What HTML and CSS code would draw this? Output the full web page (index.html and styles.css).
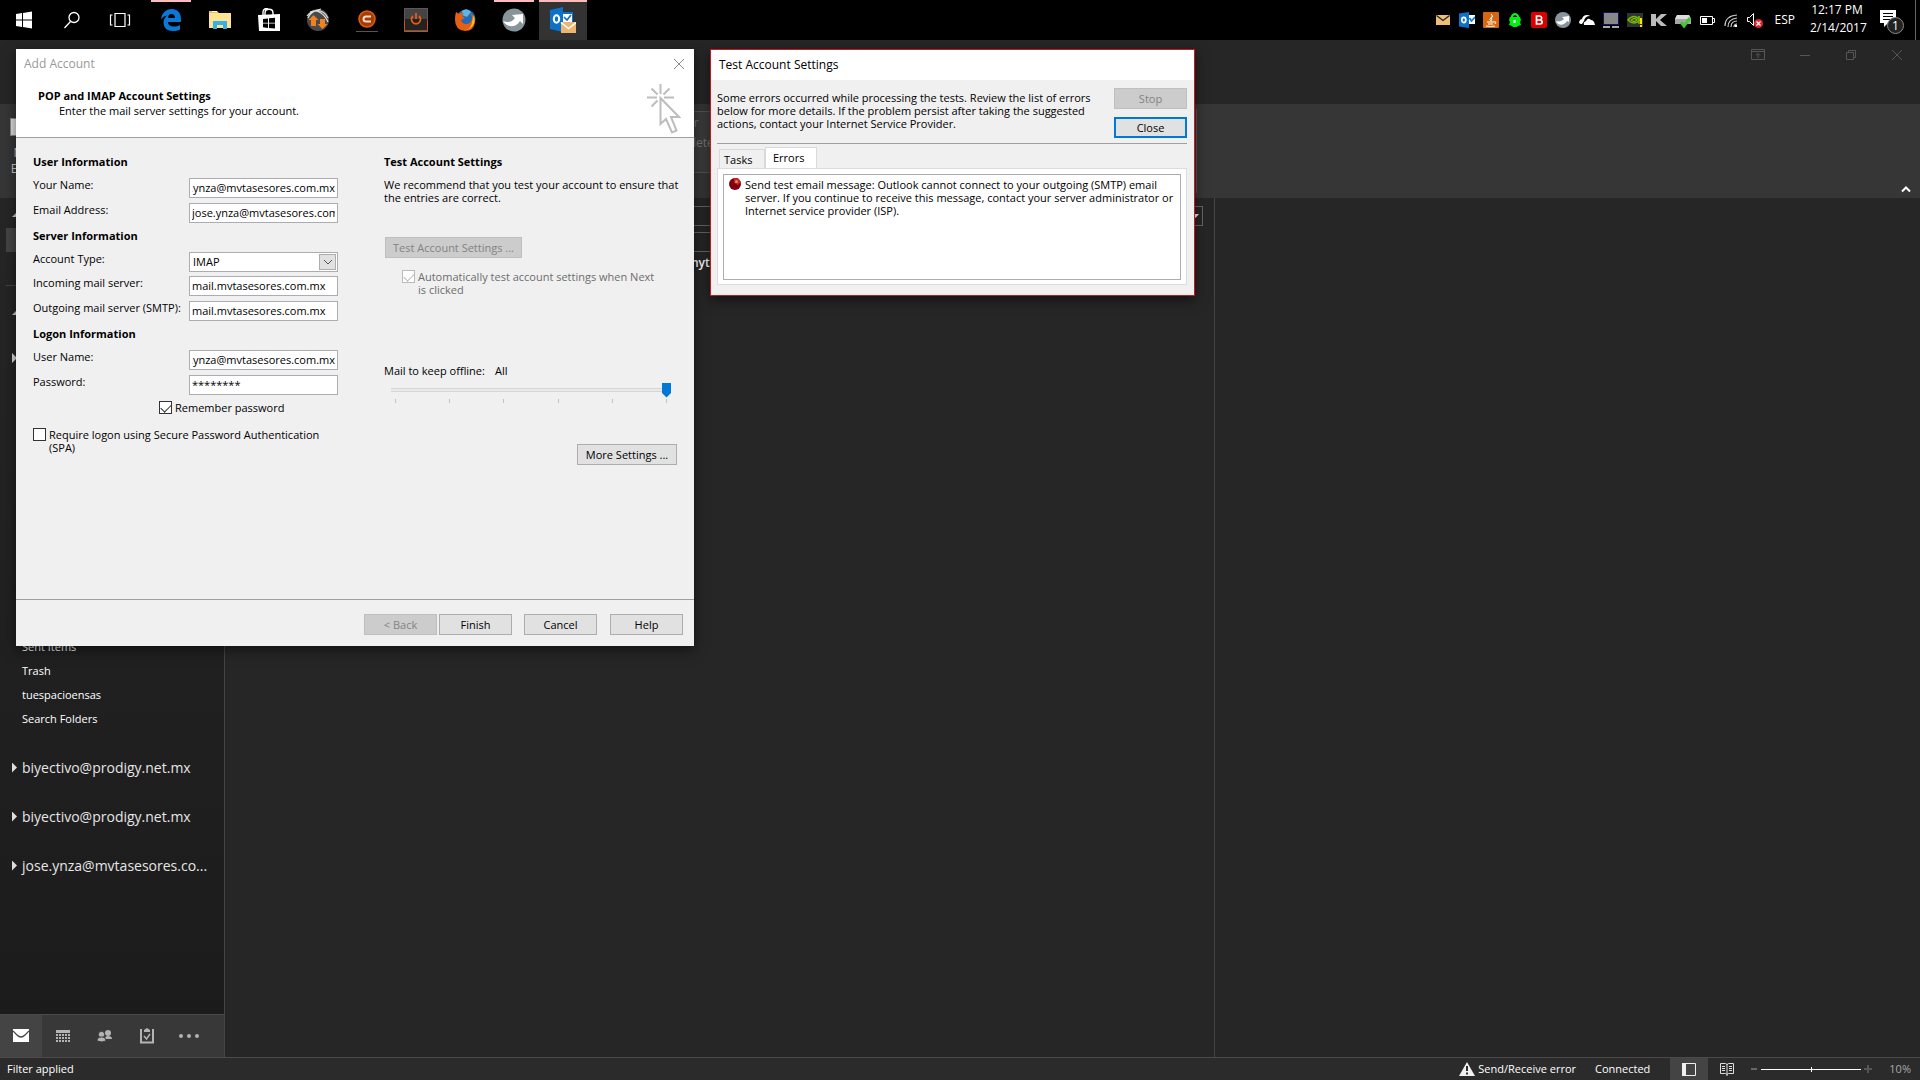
FILE: index.html
```html
<!DOCTYPE html>
<html lang="en">
<head>
<meta charset="utf-8">
<title>Outlook</title>
<link rel="stylesheet" href="styles.css">
</head>
<body>
<header class="taskbar">
  <nav class="apps">
    <button class="app" aria-label="Start"><svg width="18" height="18" viewBox="0 0 18 18" fill="#fff"><path d="M1 3l6-1v6.500H1zM8 2l9-1.500v8H8zM1 9.500h6V16l-6-1zM8 9.500h9v8L8 16z"/></svg></button>
    <button class="app" aria-label="Search"><svg width="18" height="18" viewBox="0 0 18 18" fill="none" stroke="#fff" stroke-width="1.300"><circle cx="11" cy="6.500" r="5"/><path d="M7.500 10.500L1.500 17"/></svg></button>
    <button class="app" aria-label="Task View"><svg width="22" height="18" viewBox="0 0 22 18" fill="none" stroke="#fff" stroke-width="1.200"><path d="M6 2.500h10v13H6zM3.500 4H1.500v10h2M18.500 4h2v10h-2"/></svg></button>
    <button class="app app-wide edge open" aria-label="Edge"><svg width="22" height="24" viewBox="0 0 22 24"><path fill="#0a78d7" d="M1 12C1.500 5 6 1 11.500 1 17.500 1 21 5 21 11v3H8c0 3 2.500 4.500 6 4.500 2.200 0 4.200-.6 6-1.600v4.600c-2 1-4.500 1.500-7 1.500-6 0-9.500-3.500-9.500-8.500 0-3 1.500-5.500 4-7C4 8 2.200 9.500 1 12zm7-2h7c0-2.500-1.300-4-3.500-4S8.200 7.500 8 10z"/></svg></button>
    <button class="app" aria-label="File Explorer"><svg width="22" height="20" viewBox="0 0 22 20"><path fill="#e8c35a" d="M0 1h8l2 2h11v3H0z"/><path fill="#fde492" d="M0 3h22v15H0z"/><path fill="#fff" d="M3 1h5v1H3z"/><path fill="#36b0e6" d="M4 11h14v8h-4v-4H8v4H4z"/></svg></button>
    <button class="app" aria-label="Store"><svg width="22" height="25" viewBox="0 0 22 25"><path d="M7 7V5c0-5 8-5 8 0v2M5 7V4c0-3 3-4 5-3" fill="none" stroke="#fff" stroke-width="1.400"/><path fill="#fff" d="M0 7l22-1v17L1 23z"/><path d="M5 11l5-.6v4.300H5zM11 10.300l6-.6v5h-6zM5 15.600h5V20l-5-.7zM11 15.600h6v5l-6-.5z"/></svg></button>
    <button class="app" aria-label="Sync"><svg width="24" height="24" viewBox="0 0 24 24"><circle cx="12" cy="12" r="11" fill="#4a4a4a"/><path d="M1 8C6 1 17 0 22 10M4 4c7-3 14 1 18 10M2 10C4 5 10 2 15 1" fill="none" stroke="#ddd" stroke-width="1.200"/><path fill="#f08020" d="M7.500 7l5 5H10v6H5v-6H2.500zM16.500 21l-5-5H14v-5h5v5h2.500z"/></svg></button>
    <button class="app" aria-label="Comodo"><svg width="24" height="26" viewBox="0 0 24 26"><circle cx="12" cy="12" r="8" fill="#a63c00" stroke="#e0600e" stroke-width="1.500"/><path d="M16 9.500H11q-2.500 0-2.500 2.500t2.500 2.500h5" fill="none" stroke="#f3dccd" stroke-width="2"/><path stroke="#555" d="M1 24.500h22"/></svg></button>
    <button class="app" aria-label="Power"><svg width="24" height="24" viewBox="0 0 24 24"><path fill="#383838" d="M0 0h24v24H0z"/><path d="M.5.500h23v22H.5z" fill="#444" stroke="#5a5a5a"/><path d="M1 11h22v11H1z" fill="#222"/><path stroke="#c4531a" d="M.5 12v11.500h23V12" fill="none"/><path d="M9 8a4.500 4.500 0 1 0 6 0M12 5v6" fill="none" stroke="#f25c0e" stroke-width="1.700"/></svg></button>
    <button class="app" aria-label="Firefox"><svg width="22" height="24" viewBox="0 0 22 24"><circle cx="12" cy="11" r="9.500" fill="#2469b5"/><path fill="#5db6e4" d="M8 3q5-4 9 1l-4 5-5-2z"/><path fill="#e75f12" d="M2 4l3 2q2-2 5-1L8 8l3 2-4 2q1 4 5 4 5 0 6-5 0-4-2-6 5 3 5 9-1 9-10 9Q1 22 1 12q0-5 1-8z"/><path fill="#fbbb20" d="M20 7q3 12-8 15 6-3 6-8 1-5 2-7z"/></svg></button>
    <button class="app app-wide browser open" aria-label="Browser"><svg width="24" height="24" viewBox="0 0 24 24"><circle cx="12" cy="12" r="11.500" fill="#87949b"/><path fill="#fff" d="M1 13c5 2 9 1 12-3l-3-3 11-1v10l-3-3c-4 7-13 7-17 0z"/></svg></button>
    <button class="app app-active open" aria-label="Outlook"><svg width="26" height="26" viewBox="0 0 26 26"><path fill="#0a73c9" d="M0 3l13-3v25L0 22zM13 5h10v13H13z"/><path fill="#fff" d="M13 7h9v9h-9z"/><path d="M14 10l3 3 4-5" fill="none" stroke="#0a73c9" stroke-width="1.700"/><ellipse cx="6.500" cy="12" rx="2.700" ry="3.700" fill="none" stroke="#fff" stroke-width="2"/><path fill="#edb56f" d="M11 15h15v11H11z"/><path d="M11 15.500l7.500 6 7.500-6" fill="none" stroke="#fff" stroke-width="1.500"/></svg></button>
  </nav>
  <div class="tray">
    <svg viewBox="0 0 16 16"><path fill="#efbd7a" d="M1 3h14v10H1z"/><path d="M1.500 3.500L8 8.500l6.500-5" fill="none" stroke="#222" stroke-width="1.300"/></svg>
    <svg viewBox="0 0 16 16"><path fill="#0a73c9" d="M0 1.500L10 0v16L0 14.500z"/><path fill="#fff" d="M10 3h6v9h-6z"/><ellipse cx="4.800" cy="8" rx="2" ry="2.600" fill="none" stroke="#fff" stroke-width="1.700"/><path d="M10.500 6l2 3L16 5" fill="none" stroke="#0a73c9" stroke-width="1.500"/></svg>
    <svg viewBox="0 0 16 16"><rect width="16" height="16" rx="1" fill="#d8660f"/><path d="M8 2q3 2 0 4t1 3M10 4q-3 2-1 4M4 10h7q3-1 1 2M5 12h5M3 14q5 1 9 0" fill="none" stroke="#fff"/></svg>
    <svg viewBox="0 0 16 16"><path d="M5 7V4q3-4 6 0v3" fill="none" stroke="#0f1" stroke-width="2"/><path fill="#00f010" d="M3 5h10l1 3-1 2 1 3-3 1-1 1H6l-1-1-3-1 1-3-1-2z"/><path d="M7.500 8v3" stroke="#fff" stroke-width="2"/></svg>
    <svg viewBox="0 0 16 16"><rect width="16" height="16" rx="2" fill="#dc0000"/><path d="M5.500 4h3.200q2 .3 2 2T8.700 8H5.500zM5.500 8h3.500q2.200.3 2.200 2T9 12H5.500z" fill="none" stroke="#fff" stroke-width="1.700"/></svg>
    <svg viewBox="0 0 16 16"><circle cx="8" cy="8" r="8" fill="#87949b"/><path fill="#fff" d="M1 9c3 1 6 0 8-2L7 5l7-1v6l-2-1c-3 5-9 5-11 0z"/></svg>
    <svg viewBox="0 0 16 16"><path fill="#fff" d="M0 10q1-3 3-3 1-4 5-4 2 0 3 1-5 0-6 5l-2 3Q0 12 0 10zM5 13q-1-3 2-4 2-4 5-1 3 0 4 5z"/></svg>
    <svg viewBox="0 0 16 16"><path fill="#888" stroke="#116" d="M.5.500h15v12H.5z"/><path fill="#aaa" d="M0 14h7v2H0zM9 14h7v2H9z"/></svg>
    <svg viewBox="0 0 16 16"><path fill="#2d3436" d="M0 1h16v14H0z"/><path d="M1 8q6-7 12 0-6 6-12 0zM4 8q4-3 6 0-3 3-6 0M12 4v8" fill="none" stroke="#76b900" stroke-width="1.500"/><path stroke="#ffe000" stroke-width="2" d="M14 6v6M14 13v2"/></svg>
    <svg viewBox="0 0 16 16"><path fill="#bbb" d="M0 2h5v5l5-5h6L9 8l7 6h-6L5 9v5H0z"/></svg>
    <svg viewBox="0 0 16 16"><path fill="#a6a6ab" d="M2 3h12l2 4v5H0V7z"/><path fill="#ddd" d="M2 3h12l2 4H0z"/><path d="M6 10l3 4 6-8" fill="none" stroke="#49c52f" stroke-width="3"/></svg>
    <svg viewBox="0 0 16 16"><path d="M1.500 4.500h12v8h-12zM13.500 6.500h2v4h-2" fill="none" stroke="#fff"/><path fill="#fff" d="M3 6h5v5H3z"/></svg>
    <svg viewBox="0 0 16 16"><path d="M2 14Q2 4 14 3M5 15Q5 7 14 6M8 15q0-6 6-6M11 15q0-3 3-3" fill="none" stroke="#ccc" stroke-width="1.200"/><path fill="#fff" d="M12 13h2v2h-2z"/></svg>
    <svg viewBox="0 0 16 16"><path d="M.5 5.500h2l4-4v12l-4-4h-2z" fill="none" stroke="#fff"/><circle cx="11.500" cy="11.500" r="4.500" fill="#dc2430"/><path d="M9.500 9.500l4 4M13.500 9.500l-4 4" stroke="#fff" stroke-width="1.200"/></svg>
    <span class="lang">ESP</span>
    <time class="clock"><span>12:17 PM</span><span>2/14/2017</span></time>
    <button class="notify" aria-label="Notifications"><svg viewBox="0 0 24 24"><path fill="#fff" d="M0 0h16v13h-8l-4 4v-4H0z"/><path stroke="#000" d="M3 3.500h10M3 6.500h10M3 9.500h7"/></svg><span class="count">1</span></button>
  </div>
</header>

<main class="outlook">
  <div class="caption">
    <button aria-label="Ribbon options"><svg width="14" height="12" viewBox="0 0 14 12"><path d="M.5.500h13v10H.5zM.5 2.500h13M7 9V4.500M5 6.500l2-2 2 2"/></svg></button>
    <button aria-label="Minimize"><svg width="12" height="12" viewBox="0 0 12 12"><path d="M1 6.500h10"/></svg></button>
    <button aria-label="Restore"><svg width="12" height="12" viewBox="0 0 12 12"><path d="M1.500 3.500h7v7h-7zM3.500 3.500v-2h7v7h-2"/></svg></button>
    <button aria-label="Close"><svg width="12" height="12" viewBox="0 0 12 12"><path d="M1 1l10 10M11 1L1 11"/></svg></button>
  </div>
  <div class="ribbon">
    <button class="new-email"><span class="sheet"></span><span>New</span><span>Email</span></button>
    <div class="quick-steps"><div class="gallery"><span>To Manager</span><span>Reply &amp; Delete</span></div></div>
    <button class="collapse" aria-label="Collapse ribbon"><svg width="10" height="8" viewBox="0 0 10 8"><path d="M1 6.500l4-4 4 4" fill="none" stroke="#fff" stroke-width="2"/></svg></button>
  </div>
  <div class="panes">
    <aside class="sidebar">
      <div class="favorites"><span class="tri-open"></span><span class="selected-row"></span></div>
      <div class="account-top"><span class="tri-open"></span></div>
      <div class="account-sub"><span class="tri"></span></div>
      <ul class="folders">
        <li><a href="#">Sent Items</a></li>
        <li><a href="#">Trash</a></li>
        <li><a href="#">tuespacioensas</a></li>
        <li><a href="#">Search Folders</a></li>
      </ul>
      <ul class="accounts">
        <li><span class="tri"></span><a href="#">biyectivo@prodigy.net.mx</a></li>
        <li><span class="tri"></span><a href="#">biyectivo@prodigy.net.mx</a></li>
        <li><span class="tri"></span><a href="#">jose.ynza@mvtasesores.co...</a></li>
      </ul>
      <nav class="modules">
        <button class="module current" aria-label="Mail"><svg width="16" height="14" viewBox="0 0 16 14"><path fill="#fff" d="M0 0h16v13H0z"/><path d="M0 2l4 4q4 4 8 0l4-4" fill="none" stroke="#444" stroke-width="1.200"/></svg></button>
        <button class="module" aria-label="Calendar"><svg width="14" height="12" viewBox="0 0 14 12"><path fill="#b4b4b4" d="M0 0h14v3H0z"/><path d="M0 5h14M0 8h14M0 11h14" stroke="#b4b4b4" stroke-width="2" stroke-dasharray="2 1"/></svg></button>
        <button class="module" aria-label="People"><svg width="16" height="14" viewBox="0 0 16 14" fill="#b4b4b4"><circle cx="11" cy="4" r="3"/><path d="M8 10q0-3 3-3 4 0 4 3z"/><g stroke="#383838"><circle cx="4.500" cy="5.500" r="3.200"/><path d="M0 12q0-4 4.500-4T9 12q-4 2-9 0z"/></g></svg></button>
        <button class="module" aria-label="Tasks"><svg width="14" height="16" viewBox="0 0 14 16"><path d="M1 1v13.500h12V1" fill="none" stroke="#b4b4b4" stroke-width="2"/><path fill="#b4b4b4" d="M4 2l3-2 3 2v2H4z"/><path d="M4 8l2.500 3L10 6" fill="none" stroke="#b4b4b4" stroke-width="1.500"/></svg></button>
        <button class="module" aria-label="More"><svg width="20" height="4" viewBox="0 0 20 4" fill="#b4b4b4"><circle cx="2" cy="2" r="2"/><circle cx="10" cy="2" r="2"/><circle cx="18" cy="2" r="2"/></svg></button>
      </nav>
    </aside>
    <section class="list-pane">
      <div class="search-box"><span class="caret"></span></div>
      <div class="list-head"></div>
      <p class="empty">We didn't find anything to show here.</p>
    </section>
    <section class="reading-pane"></section>
  </div>
  <footer class="status">
    <span>Filter applied</span>
    <div class="status-right">
      <span class="sync"><svg width="16" height="14" viewBox="0 0 16 14"><path fill="#f0f0f0" d="M8 0l8 14H0z"/><path stroke="#2b2b2b" stroke-width="2" d="M8 4v5M8 10.500v2"/></svg>Send/Receive error</span>
      <span class="conn">Connected</span>
      <button class="view view-on" aria-label="Normal view"><svg width="14" height="13" viewBox="0 0 14 13"><path d="M.5.500h13v12H.5z" fill="none" stroke="#f0f0f0"/><path fill="#f0f0f0" d="M0 0h4v13H0z"/></svg></button>
      <button class="view" aria-label="Reading view"><svg width="14" height="13" viewBox="0 0 14 13"><path d="M.5.500h5l1.500 1 1.500-1h5v10h-5l-1.500 1-1.500-1h-5zM7 1v12M2 3.500h3M2 5.500h3M2 7.500h3M9 3.500h3M9 5.500h3M9 7.500h3" fill="none" stroke="#ddd"/></svg></button>
      <span class="minus"><svg width="6" height="6" viewBox="0 0 6 6"><path stroke="#666" stroke-width="2" d="M0 3h6"/></svg></span>
      <input class="zoom" type="range" min="0" max="100" value="50" aria-label="Zoom">
      <span class="plus"><svg width="8" height="8" viewBox="0 0 8 8"><path stroke="#555" stroke-width="2" d="M0 4h8M4 0v8"/></svg></span>
      <span class="percent">10%</span>
    </div>
  </footer>
</main>

<section class="dialog add-account" role="dialog" aria-label="Add Account">
  <header class="add-head">
    <div class="add-title"><span>Add Account</span><button class="x" aria-label="Close"><svg width="12" height="12" viewBox="0 0 12 12"><path d="M1 1l10 10M11 1L1 11" stroke="#888"/></svg></button></div>
    <div class="add-intro">
      <div><h1>POP and IMAP Account Settings</h1><p>Enter the mail server settings for your account.</p></div>
      <svg class="pointer" width="34" height="50" viewBox="0 0 34 50" fill="none" stroke="#bdbdbd" stroke-width="2"><path d="M13.500 0v10M0 13.500h10M17 13.500h10M4.500 4.500l6 6M22.500 4.500l-6 6M4.500 22.500l6-6M13.500 14v26l5.500-5 6 13.500 4.500-2L24 33h8z"/></svg>
    </div>
  </header>
  <div class="add-body">
    <form class="form">
      <h2>User Information</h2>
      <div class="row"><label for="name">Your Name:</label><input class="field tail" id="name" type="text" value="jose.ynza@mvtasesores.com.mx"></div>
      <div class="row"><label for="email">Email Address:</label><input class="field" id="email" type="text" value="jose.ynza@mvtasesores.com.mx"></div>
      <h2>Server Information</h2>
      <div class="row row-tight"><label for="type">Account Type:</label><span class="select"><select class="field" id="type"><option>IMAP</option></select><span class="drop"><svg width="10" height="6" viewBox="0 0 10 6"><path d="M1 1l4 4 4-4" fill="none" stroke="#555"/></svg></span></span></div>
      <div class="row"><label for="in">Incoming mail server:</label><input class="field" id="in" type="text" value="mail.mvtasesores.com.mx"></div>
      <div class="row"><label for="out">Outgoing mail server (SMTP):</label><input class="field" id="out" type="text" value="mail.mvtasesores.com.mx"></div>
      <h2>Logon Information</h2>
      <div class="row"><label for="user">User Name:</label><input class="field tail" id="user" type="text" value="jose.ynza@mvtasesores.com.mx"></div>
      <div class="row"><label for="pass">Password:</label><input class="field" id="pass" type="text" value="********"></div>
      <label class="check remember"><input type="checkbox" checked><span>Remember password</span></label>
      <label class="check spa"><input type="checkbox"><span>Require logon using Secure Password Authentication (SPA)</span></label>
    </form>
    <div class="test">
      <h2>Test Account Settings</h2>
      <p>We recommend that you test your account to ensure that the entries are correct.</p>
      <button class="btn btn-test" disabled>Test Account Settings ...</button>
      <label class="check auto"><input type="checkbox" checked disabled><span>Automatically test account settings when Next is clicked</span></label>
      <label class="offline" for="offline"><span>Mail to keep offline:</span><span>All</span></label>
      <input class="slider" id="offline" type="range" min="0" max="5" value="5">
      <div class="ticks"><i></i><i></i><i></i><i></i><i></i><i></i></div>
      <button class="btn btn-more">More Settings ...</button>
    </div>
  </div>
  <footer class="add-foot">
    <button class="btn" disabled>&lt; Back</button>
    <button class="btn finish">Finish</button>
    <button class="btn cancel">Cancel</button>
    <button class="btn">Help</button>
  </footer>
</section>

<section class="dialog test-dialog" role="dialog" aria-label="Test Account Settings">
  <header class="test-title">Test Account Settings</header>
  <div class="test-top">
    <p>Some errors occurred while processing the tests. Review the list of errors below for more details. If the problem persist after taking the suggested actions, contact your Internet Service Provider.</p>
    <div class="test-actions"><button class="btn" disabled>Stop</button><button class="btn primary">Close</button></div>
  </div>
  <div class="tabs"><button class="tab">Tasks</button><button class="tab tab-on">Errors</button></div>
  <div class="panel"><div class="errors">
    <svg width="12" height="12" viewBox="0 0 12 12"><circle cx="6" cy="6" r="6" fill="#800010"/><path fill="#d02030" d="M5 0h4l3 4-3 3-4-2z"/><circle cx="7.500" cy="3.500" r="1.500" fill="#b8a040"/></svg>
    <p>Send test email message: Outlook cannot connect to your outgoing (SMTP) email server. If you continue to receive this message, contact your server administrator or Internet service provider (ISP).</p>
  </div></div>
</section>
</body>
</html>
```
FILE: styles.css
```css
* { box-sizing: border-box; }
body {
  margin: 0;
  min-height: 100vh;
  display: flex;
  flex-direction: column;
  background: #262626;
  color: #fff;
  font: 12px/16px "Open Sans", "Noto Sans", sans-serif;
}
button, input, select { font: inherit; color: inherit; margin: 0; padding: 0; }
button { border: 0; background: none; }
h1, h2, p, ul { margin: 0; padding: 0; }
ul { list-style: none; }
a { color: inherit; text-decoration: none; }
svg { display: block; flex: none; }

/* Taskbar */
.taskbar { display: flex; justify-content: space-between; height: 40px; background: #000; }
.apps { display: flex; }
.app { width: 48px; display: flex; align-items: center; justify-content: center; border-top: 2px solid transparent; border-bottom: 2px solid transparent; }
.app:nth-child(n+4) { width: 49px; }
.app.app-wide { width: 40px; }
.edge { margin: 0 4px 0 7px; }
.browser { margin: 0 5px; }
.open { border-top-color: #fbb; }
.app.app-active { width: 48px; background: #333; border-bottom-color: #333; }
.tray { display: flex; align-items: center; gap: 8px; border-right: 1px solid #666; margin-right: 4px; }
.tray > svg { width: 16px; height: 16px; }
.lang { margin: 0 7px 0 4px; }
.clock { display: flex; flex-direction: column; text-align: center; line-height: 18px; width: 54px; margin-bottom: 2px; }
.notify { width: 28px; height: 24px; margin: 4px 7px 0 8px; position: relative; }
.notify svg { width: 24px; height: 24px; }
.count { position: absolute; left: 7px; top: 7px; width: 17px; height: 17px; border: 1px solid #888; border-radius: 50%; background: #222; line-height: 15px; text-align: center; }

/* Outlook window */
.outlook { flex: 1; display: flex; flex-direction: column; }
.caption { display: flex; justify-content: flex-end; gap: 34px; height: 64px; padding: 9px 17px 0 0; align-items: flex-start; }
.caption svg { fill: none; stroke: #555; }
.ribbon { display: flex; align-items: flex-start; height: 94px; background: #363636; color: #ccc; padding: 5px 9px 0 10px; }
.new-email { display: flex; flex-direction: column; align-items: center; width: 32px; padding-top: 9px; line-height: 16px; }
.sheet { width: 32px; height: 18px; background: #ddd; border: 1px solid #888; margin-bottom: 9px; }
.quick-steps { width: 655px; height: 84px; margin-left: 500px; border-right: 1px solid #555; padding: 2px 40px 0 20px; }
.gallery { display: flex; flex-direction: column; height: 62px; padding: 1px 0 0 69px; border: 1px solid #555; background: #3c3c3c; color: #777; line-height: 20px; }
.collapse { margin: 76px 0 0 auto; }
.panes { flex: 1; display: grid; grid-template-columns: 225px 990px 1fr; }
.sidebar { display: flex; flex-direction: column; background: linear-gradient(#262626, #1b1b1b); border-right: 1px solid #444; }
.favorites { height: 88px; margin-left: 6px; padding: 13px 0 0 6px; border-bottom: 1px solid #444; }
.tri-open { display: block; width: 6px; height: 6px; background: #ccc; clip-path: polygon(100% 0, 100% 100%, 0 100%); }
.selected-row { display: block; height: 24px; margin: 11px 0 0 -6px; background: #444; }
.account-top { padding: 23px 0 0 12px; height: 67px; }
.account-sub { padding-left: 12px; height: 282px; }
.tri { display: block; width: 5px; height: 10px; background: #ddd; clip-path: polygon(0 0, 100% 50%, 0 100%); }
.folders { padding-left: 22px; font-size: 11px; line-height: 24px; }
.accounts { margin-top: 12px; font-size: 14px; line-height: 49px; color: #e6e6e6; }
.accounts li { display: flex; align-items: center; gap: 5px; padding-left: 12px; white-space: nowrap; }
.modules { display: flex; margin-top: auto; height: 43px; background: #383838; border-top: 1px solid #4a4a4a; }
.module { width: 42px; display: flex; align-items: center; justify-content: center; }
.current { background: #444; }
.list-pane { border-right: 1px solid #444; }
.search-box { height: 20px; margin: 8px 11px 6px 12px; border: 1px solid #666; display: flex; justify-content: flex-end; align-items: center; padding-right: 3px; }
.caret { width: 7px; height: 4px; background: #eee; clip-path: polygon(0 0, 100% 0, 50% 100%); }
.list-head { height: 20px; margin-right: 60px; border: solid #666; border-width: 1px 0; }
.empty { margin-top: 3px; text-align: center; font-weight: 600; padding-right: 22px; }
.status { display: flex; justify-content: space-between; align-items: center; height: 23px; padding: 0 9px 0 7px; background: #2b2b2b; border-top: 1px solid #4a4a4a; font-size: 11px; line-height: 20px; }
.status-right { display: flex; align-items: center; }
.sync { display: flex; align-items: center; gap: 3px; }
.conn { margin: 0 20px 0 19px; }
.view { width: 38px; height: 22px; display: flex; align-items: center; justify-content: center; }
.view-on { background: #444; }
.minus { width: 10px; margin-left: 5px; }
.plus { width: 10px; margin-left: 3px; }
.zoom { appearance: none; width: 100px; height: 12px; background: linear-gradient(#fff, #fff) center / 100% 1px no-repeat; }
.zoom::-webkit-slider-thumb { appearance: none; width: 1px; height: 5px; background: #fff; }
.percent { color: #aaa; margin-left: 15px; }

/* Dialogs */
.dialog { position: absolute; background: #f0f0f0; color: #000; font-size: 11px; line-height: 13px; box-shadow: 0 4px 12px #0008; }
.btn { width: 73px; height: 21px; border: 1px solid #adadad; background: #e1e1e1; line-height: 17px; }
.btn:disabled { background: #ccc; border-color: #bfbfbf; color: #838383; }
.primary { border: 2px solid #0078d7; }
h1, h2 { font-size: 11px; line-height: 13px; font-weight: 700; }

.add-account { left: 16px; top: 49px; width: 678px; height: 597px; display: flex; flex-direction: column; }
.add-head { background: #fff; height: 89px; border-bottom: 1px solid #a0a0a0; }
.add-title { display: flex; justify-content: space-between; padding: 7px 9px 0 8px; font-size: 12px; line-height: 16px; color: #999; }
.add-intro { display: flex; justify-content: space-between; padding: 0 13px 0 22px; }
.add-intro h1 { margin-top: 17px; }
.add-intro p { margin: 2px 0 0 21px; }
.pointer { margin-top: 12px; }
.add-body { flex: 1; display: grid; grid-template-columns: 351px 1fr; padding: 17px 8px 0 17px; }
.add-body h2 { margin-bottom: 10px; }
.row { display: grid; grid-template-columns: 156px 149px; margin-bottom: 5px; white-space: nowrap; }
.row-tight { margin-bottom: 4px; }
.form h2:not(:first-child) { margin-top: 6px; }
.field { width: 149px; height: 20px; border: 1px solid #abadb3; border-radius: 0; background: #fff; padding: 0 2px 2px; outline: 0; }
.tail { direction: rtl; }
.select { position: relative; }
.select .field { appearance: none; padding: 0 3px 2px; }
.drop { position: absolute; right: 2px; top: 2px; width: 17px; height: 16px; border: 1px solid #adadad; background: #e1e1e1; display: grid; place-items: center; pointer-events: none; }
.check { display: flex; gap: 3px; }
.check input { appearance: none; flex: none; width: 13px; height: 13px; border: 1px solid #333; background: #fff; }
.check input:checked::after { content: ""; display: block; width: 9px; height: 5px; margin: 2px 0 0 1px; border: solid #333; border-width: 0 0 1px 1px; transform: rotate(-45deg); }
.check input:disabled, .check input:disabled::after { border-color: #bbb; }
.remember { margin: 6px 0 14px 126px; }
.spa { width: 300px; }
.test { display: flex; flex-direction: column; align-items: flex-start; }
.btn-test { width: 137px; margin: 33px 0 12px 1px; }
.auto { color: #6d6d6d; margin-left: 18px; width: 255px; }
.offline { display: flex; gap: 10px; margin: 68px 0 5px; }
.slider { appearance: none; width: 280px; height: 16px; margin-left: 7px; background: linear-gradient(#d6d6d6 1px, #e7eaea 1px 3px, #d6d6d6 3px) center / 100% 4px no-repeat; }
.slider::-webkit-slider-thumb { appearance: none; width: 9px; height: 15px; background: #0078d7; clip-path: polygon(0 0, 100% 0, 100% 70%, 50% 100%, 0 70%); }
.ticks { display: flex; justify-content: space-between; width: 272px; margin: 1px 0 0 11px; }
.ticks i { width: 1px; height: 4px; background: #c4c4c4; }
.btn-more { width: 100px; margin: 41px 0 0 193px; }
.add-foot { display: flex; justify-content: flex-end; height: 47px; padding: 14px 11px 0; border-top: 1px solid #a0a0a0; }
.finish { margin: 0 12px 0 2px; }
.cancel { margin-right: 13px; }

.test-dialog { left: 710px; top: 49px; width: 485px; height: 247px; border: 1px solid #c8181e; padding: 0 7px 0 6px; }
.test-title { background: #fff; margin: 0 -7px 0 -6px; padding: 7px 8px; height: 30px; font-size: 12px; line-height: 16px; }
.test-top { display: flex; justify-content: space-between; height: 64px; padding-top: 8px; border-bottom: 1px solid #a0a0a0; }
.test-top p { width: 380px; padding-top: 3px; }
.test-actions { display: flex; flex-direction: column; gap: 8px; }
.tabs { display: flex; align-items: flex-end; padding: 3px 2px 0; }
.tab { width: 46px; height: 19px; border: 1px solid #d9d9d9; border-bottom: 0; text-align: left; padding-left: 4px; }
.tab-on { width: 52px; height: 21px; background: #fff; padding: 0 0 2px 7px; }
.panel { border: 1px solid #dcdcdc; background: #fff; padding: 5px; height: 117px; }
.errors { display: flex; gap: 4px; height: 106px; border: 1px solid #abadb3; padding: 3px 5px; }
```
